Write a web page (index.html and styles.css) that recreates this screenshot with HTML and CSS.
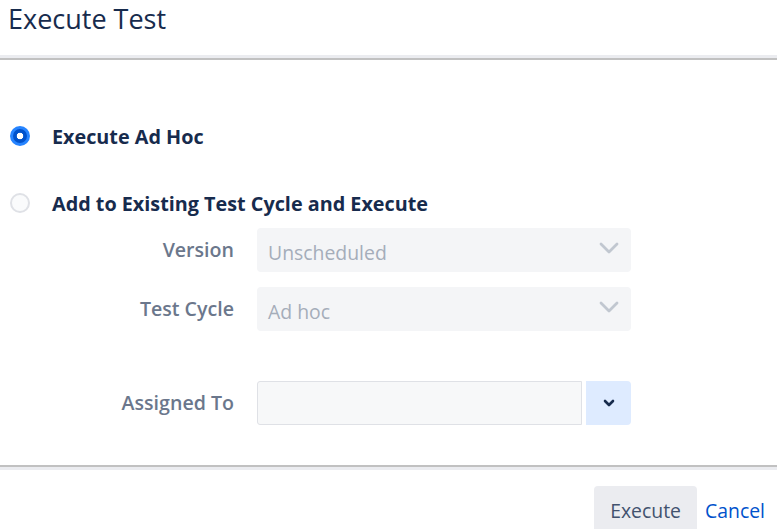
FILE: index.html
```html
<!DOCTYPE html>
<html>
<head>
<meta charset="utf-8">
<link rel="stylesheet" href="styles.css">
</head>
<body>
<div class="dialog">
  <header class="hdr"><h1 class="title">Execute Test</h1></header>
  <div class="sep-top"></div>
  <main class="content">
    <div class="radio-row">
      <span class="radio checked"></span>
      <span class="radio-label">Execute Ad Hoc</span>
    </div>
    <div class="radio-row second">
      <span class="radio"></span>
      <span class="radio-label">Add to Existing Test Cycle and Execute</span>
    </div>
    <div class="field version">
      <span class="flabel">Version</span>
      <div class="select">
        <span class="placeholder">Unscheduled</span>
        <svg class="chev" width="20" height="12" viewBox="0 0 20 12"><path d="M2 2 L10 10 L18 2" fill="none" stroke="#c1c7d0" stroke-width="2.8" stroke-linecap="round" stroke-linejoin="round"/></svg>
      </div>
    </div>
    <div class="field cycle">
      <span class="flabel">Test Cycle</span>
      <div class="select">
        <span class="placeholder">Ad hoc</span>
        <svg class="chev" width="20" height="12" viewBox="0 0 20 12"><path d="M2 2 L10 10 L18 2" fill="none" stroke="#c1c7d0" stroke-width="2.8" stroke-linecap="round" stroke-linejoin="round"/></svg>
      </div>
    </div>
    <div class="field assigned">
      <span class="flabel">Assigned To</span>
      <div class="combo">
        <div class="input"></div>
        <div class="drop">
          <svg width="12" height="8" viewBox="0 0 12 8"><path d="M2 2 L6 6 L10 2" fill="none" stroke="#172b4d" stroke-width="2.6" stroke-linecap="round" stroke-linejoin="round"/></svg>
        </div>
      </div>
    </div>
  </main>
  <div class="sep-bottom"></div>
  <footer class="ftr">
    <button class="btn-exec">Execute</button>
    <a class="cancel">Cancel</a>
  </footer>
</div>
</body>
</html>
```
FILE: styles.css
```css
html, body {
  margin: 0;
  padding: 0;
  background: #ffffff;
}
body {
  font-family: "Open Sans", "Noto Sans", sans-serif;
  width: 777px;
  height: 529px;
  overflow: hidden;
}
.dialog {
  display: flex;
  flex-direction: column;
}
.hdr {
  height: 55px;
  box-sizing: border-box;
  display: flex;
  align-items: flex-start;
  padding-left: 8px;
}
.title {
  margin: 0;
  font-size: 27px;
  font-weight: 400;
  color: #172b4d;
  line-height: 37px;
}
.sep-top {
  height: 3px;
  background: #ebecf0;
  border-bottom: 2px solid #c1c1c1;
}
.content {
  height: 405px;
  padding-top: 56px;
  box-sizing: border-box;
  display: flex;
  flex-direction: column;
}
.radio-row {
  height: 40px;
  display: flex;
  align-items: center;
  padding-left: 10px;
  gap: 22px;
}
.radio-row.second {
  margin-top: 27px;
}
.radio {
  width: 16px;
  height: 16px;
  border-radius: 50%;
  border: 2px solid #dfe1e6;
  background: #fafbfc;
  flex: none;
}
.radio.checked {
  width: 14px;
  height: 14px;
  border: 3px solid #2684ff;
  background: radial-gradient(circle, #ffffff 0 3px, #0052cc 3.6px);
}
.radio-label {
  font-size: 19.8px;
  font-weight: 700;
  color: #172b4d;
}
.field {
  display: flex;
  align-items: center;
  gap: 23px;
  height: 44px;
}
.field.version { margin-top: 5px; }
.field.cycle { margin-top: 15px; }
.field.assigned { margin-top: 50px; }
.flabel {
  width: 234px;
  text-align: right;
  font-size: 19.6px;
  font-weight: 600;
  color: #6b778c;
  flex: none;
  margin-top: -2px;
}
.select {
  width: 374px;
  height: 44px;
  background: #f4f5f7;
  border-radius: 4px;
  display: flex;
  align-items: center;
  justify-content: space-between;
  padding: 0 12px 0 11px;
  box-sizing: border-box;
}
.placeholder {
  font-size: 19.4px;
  color: #a5adba;
  margin-top: 5px;
}
.chev { margin-bottom: 4px; }
.combo {
  display: flex;
  gap: 4px;
  height: 44px;
}
.input {
  width: 325px;
  height: 44px;
  box-sizing: border-box;
  border: 1px solid #dfe1e6;
  border-radius: 3px 0 0 3px;
  background: #f7f8f9;
}
.drop {
  width: 45px;
  height: 44px;
  background: #deebff;
  border-radius: 0 4px 4px 0;
  display: flex;
  align-items: center;
  justify-content: center;
}
.sep-bottom {
  height: 3px;
  background: #ebecf0;
  border-top: 2px solid #c1c1c1;
}
.ftr {
  display: flex;
  justify-content: flex-end;
  align-items: flex-start;
  padding-top: 16px;
  padding-right: 12px;
  gap: 8px;
}
.btn-exec {
  width: 103px;
  height: 50px;
  border: none;
  border-radius: 4px;
  background: #ebecf0;
  color: #42526e;
  font-family: "Open Sans", "Noto Sans", sans-serif;
  font-size: 19.4px;
  padding: 0;
  padding-bottom: 2px;
}
.cancel {
  font-size: 19.4px;
  color: #0052cc;
  line-height: 50px;
}
```
